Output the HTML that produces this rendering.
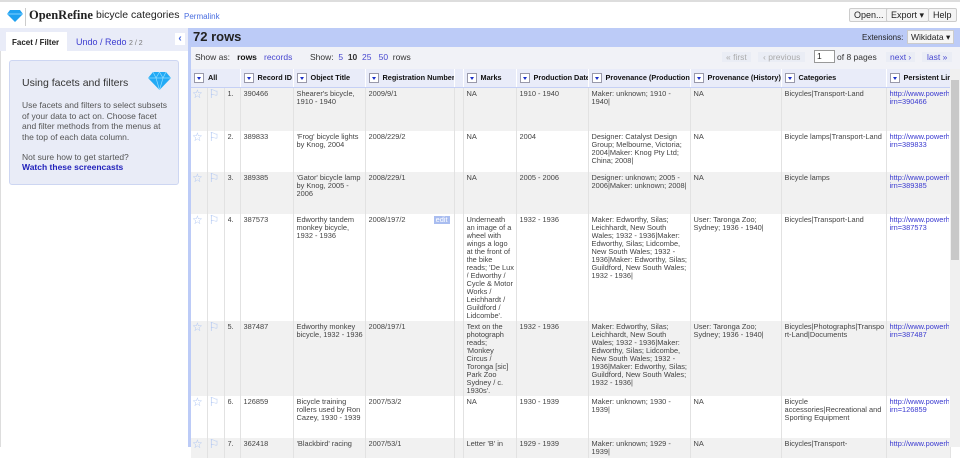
<!DOCTYPE html>
<html><head><meta charset="utf-8"><style>
*{box-sizing:border-box;margin:0;padding:0}
body{width:960px;height:447px;overflow:hidden;background:#fff;font-family:"Liberation Sans",Arial,sans-serif;position:relative;color:#222}
.abs{position:absolute}
.btn{position:absolute;top:8px;height:14px;border:1px solid #ccc;background:#f4f4f4;font-size:9px;line-height:12px;padding:0 4px;border-radius:2px;color:#222}
table{border-collapse:collapse;table-layout:fixed;width:759px;position:absolute;left:191px;top:69px;font-size:7.4px;line-height:8px}
td{vertical-align:top;padding:2px 1px 0 3px;border-right:1px solid #e2e2e2;word-wrap:break-word;color:#444}
td>div{overflow:hidden}
.h43 td>div{height:41px}.h41 td>div{height:39px}.h42 td>div{height:40px}.h107 td>div{height:105px}.h75 td>div{height:73px}.h20 td>div{height:18px}
tr.o td{background:#f1f1f1}
th{background:#e9ecf9;height:18px;border-right:1px solid #fff;border-bottom:1px solid #c5d0f5;font-size:7.3px;text-align:left;padding:0 3px;white-space:nowrap;overflow:hidden;color:#111}
.dd{display:inline-block;width:10px;height:10px;border:1px solid #99a;background:#fff;vertical-align:middle;margin-right:4px;position:relative}
.dd:after{content:"";position:absolute;left:2px;top:3px;border-left:2.5px solid transparent;border-right:2.5px solid transparent;border-top:3px solid #1a2fc8}
a{color:#3a3ad0;text-decoration:none;white-space:nowrap}
.st{color:#a9c2f2;font-size:12px;line-height:12px;padding:0 0 0 1px}
</style></head><body>
<div class="abs" style="left:0;top:0;width:960px;height:2px;background:#ddd"></div>
<svg class="abs" style="left:7px;top:10px" width="16" height="12" viewBox="0 0 16 12"><path d="M3 0h10l3 4-8 8-8-8z" fill="#1ea0f0"/><path d="M0 4h16" stroke="#7fd0ff" stroke-width="1"/></svg>
<div class="abs" style="left:25px;top:8px;width:1px;height:18px;background:#ccc"></div>
<div class="abs" style="left:29px;top:8px;font-family:'Liberation Serif',serif;font-weight:bold;font-size:12.5px">OpenRefine</div>
<div class="abs" style="left:96px;top:9px;font-size:10.5px;color:#222">bicycle categories</div>
<div class="abs" style="left:184px;top:12px;font-size:8px;color:#4a6ee0">Permalink</div>
<div class="btn" style="left:849px">Open...</div>
<div class="btn" style="left:886px">Export ▾</div>
<div class="btn" style="left:928px">Help</div>
<div class="abs" style="left:0;top:28px;width:188px;height:419px;background:#fff;border-left:1px solid #ddd"></div>
<div class="abs" style="left:0;top:28px;width:188px;height:23px;background:#e9ecf8"></div>
<div class="abs" style="left:6px;top:32px;width:61px;height:19px;background:#fff;font-size:8px;font-weight:bold;padding:6px 0 0 6px">Facet / Filter</div>
<div class="abs" style="left:76px;top:37px;font-size:9px;color:#3b3bd0">Undo / Redo <span style="color:#777;font-size:7px">2 / 2</span></div>
<div class="abs" style="left:175px;top:33px;width:10px;height:12px;background:#fff;color:#4466dd;font-size:10px;line-height:12px;text-align:center;font-weight:bold">‹</div>
<div class="abs" style="left:9px;top:60px;width:170px;height:125px;background:#e9ecf7;border:1px solid #cdd6f2;border-radius:3px"></div>
<svg class="abs" style="left:148px;top:72px" width="23" height="18" viewBox="0 0 23 18"><path d="M5 0h13l5 6-11.5 12L0 6z" fill="#22aaf5"/><path d="M0 6h23M5 0l3 6 3.5 12M18 0l-3 6-3.5 12M8 6l3.5-6 3.5 6" stroke="#8fdcff" stroke-width=".7" fill="none"/></svg>
<div class="abs" style="left:22px;top:77px;font-size:10.5px;color:#333">Using facets and filters</div>
<div class="abs" style="left:22px;top:100px;width:150px;font-size:8.5px;line-height:10.5px;color:#555">Use facets and filters to select subsets of your data to act on. Choose facet and filter methods from the menus at the top of each data column.</div>
<div class="abs" style="left:22px;top:152px;font-size:8.5px;color:#555">Not sure how to get started?</div>
<div class="abs" style="left:22px;top:162px;font-size:8.5px;font-weight:bold;color:#2222bb">Watch these screencasts</div>
<div class="abs" style="left:188px;top:28px;width:3px;height:419px;background:#bccbf7"></div>
<div class="abs" style="left:191px;top:28px;width:769px;height:19px;background:#bccbf7"></div>
<div class="abs" style="left:193px;top:29px;font-size:13px;font-weight:bold;color:#222">72 rows</div>
<div class="abs" style="left:862px;top:33px;font-size:8px;color:#222">Extensions:</div>
<div class="abs" style="left:907px;top:30px;width:47px;height:14px;background:#f5f5f5;border:1px solid #ccc;font-size:8.5px;line-height:12px;padding-left:3px">Wikidata ▾</div>
<div class="abs" style="left:191px;top:47px;width:769px;height:22px;background:#f1f2f7"></div>
<div class="abs" style="left:195px;top:52px;font-size:8.5px;color:#333">Show as: &nbsp; <b style="color:#111">rows</b> &nbsp; <span style="color:#4747d0">records</span></div>
<div class="abs" style="left:310px;top:52px;font-size:8.5px;color:#333">Show: &nbsp;<span style="color:#4747d0">5</span> &nbsp;<b>10</b> &nbsp;<span style="color:#4747d0">25</span> &nbsp; <span style="color:#4747d0">50</span> &nbsp;rows</div>
<div class="abs" style="left:722px;top:52px;font-size:8.5px;color:#aaa;background:#eaedf5;padding:0 4px">« first</div>
<div class="abs" style="left:758px;top:52px;font-size:8.5px;color:#aaa;background:#eaedf5;padding:0 5px">‹ previous</div>
<div class="abs" style="left:814px;top:50px;width:21px;height:13px;border:1px solid #999;background:#fff;font-size:8.5px;padding-left:2px">1</div>
<div class="abs" style="left:837px;top:52px;font-size:8.5px;color:#333">of 8 pages</div>
<div class="abs" style="left:886px;top:52px;font-size:8.5px;color:#4747d0;background:#eaedf5;padding:0 4px">next ›</div>
<div class="abs" style="left:922px;top:52px;font-size:8.5px;color:#4747d0;background:#eaedf5;padding:0 5px">last »</div>
<table>
<colgroup><col style="width:16px"><col style="width:17px"><col style="width:16px"><col style="width:53px"><col style="width:72px"><col style="width:89px"><col style="width:9px"><col style="width:53px"><col style="width:72px"><col style="width:102px"><col style="width:91px"><col style="width:105px"><col style="width:64px"></colgroup>
<tr><th colspan="3"><span class="dd"></span>All</th><th><span class="dd"></span>Record ID</th><th><span class="dd"></span>Object Title</th><th><span class="dd"></span>Registration Number</th><th></th><th><span class="dd"></span>Marks</th><th><span class="dd"></span>Production Date</th><th><span class="dd"></span>Provenance (Production)</th><th><span class="dd"></span>Provenance (History)</th><th><span class="dd"></span>Categories</th><th><span class="dd"></span>Persistent Link</th></tr>
<tr class="o h43"><td class="st"><div>☆</div></td><td class="st"><div>⚐</div></td><td><div>1.</div></td><td><div>390466</div></td><td><div>Shearer's bicycle, 1910 - 1940</div></td><td><div>2009/9/1</div></td><td><div></div></td><td><div>NA</div></td><td><div>1910 - 1940</div></td><td><div>Maker: unknown; 1910 - 1940|</div></td><td><div>NA</div></td><td><div>Bicycles|Transport-Land</div></td><td><div><a>http://www.powerho<br>irn=390466</a></div></td></tr>
<tr class="h41"><td class="st"><div>☆</div></td><td class="st"><div>⚐</div></td><td><div>2.</div></td><td><div>389833</div></td><td><div>'Frog' bicycle lights by Knog, 2004</div></td><td><div>2008/229/2</div></td><td><div></div></td><td><div>NA</div></td><td><div>2004</div></td><td><div>Designer: Catalyst Design Group; Melbourne, Victoria; 2004|Maker: Knog Pty Ltd; China; 2008|</div></td><td><div>NA</div></td><td><div>Bicycle lamps|Transport-Land</div></td><td><div><a>http://www.powerho<br>irn=389833</a></div></td></tr>
<tr class="o h42"><td class="st"><div>☆</div></td><td class="st"><div>⚐</div></td><td><div>3.</div></td><td><div>389385</div></td><td><div>'Gator' bicycle lamp by Knog, 2005 - 2006</div></td><td><div>2008/229/1</div></td><td><div></div></td><td><div>NA</div></td><td><div>2005 - 2006</div></td><td><div>Designer: unknown; 2005 - 2006|Maker: unknown; 2008|</div></td><td><div>NA</div></td><td><div>Bicycle lamps</div></td><td><div><a>http://www.powerho<br>irn=389385</a></div></td></tr>
<tr class="h107"><td class="st"><div>☆</div></td><td class="st"><div>⚐</div></td><td><div>4.</div></td><td><div>387573</div></td><td><div>Edworthy tandem monkey bicycle, 1932 - 1936</div></td><td><div>2008/197/2<span style="float:right;background:#a9bdf0;color:#fff;padding:0 2px;margin-right:3px">edit</span></div></td><td><div></div></td><td><div>Underneath an image of a wheel with wings a logo at the front of the bike reads; 'De Lux / Edworthy / Cycle &amp; Motor Works / Leichhardt / Guildford / Lidcombe'.</div></td><td><div>1932 - 1936</div></td><td><div>Maker: Edworthy, Silas; Leichhardt, New South Wales; 1932 - 1936|Maker: Edworthy, Silas; Lidcombe, New South Wales; 1932 - 1936|Maker: Edworthy, Silas; Guildford, New South Wales; 1932 - 1936|</div></td><td><div>User: Taronga Zoo; Sydney; 1936 - 1940|</div></td><td><div>Bicycles|Transport-Land</div></td><td><div><a>http://www.powerho<br>irn=387573</a></div></td></tr>
<tr class="o h75"><td class="st"><div>☆</div></td><td class="st"><div>⚐</div></td><td><div>5.</div></td><td><div>387487</div></td><td><div>Edworthy monkey bicycle, 1932 - 1936</div></td><td><div>2008/197/1</div></td><td><div></div></td><td><div>Text on the photograph reads; 'Monkey Circus / Toronga [sic] Park Zoo Sydney / c. 1930s'.</div></td><td><div>1932 - 1936</div></td><td><div>Maker: Edworthy, Silas; Leichhardt, New South Wales; 1932 - 1936|Maker: Edworthy, Silas; Lidcombe, New South Wales; 1932 - 1936|Maker: Edworthy, Silas; Guildford, New South Wales; 1932 - 1936|</div></td><td><div>User: Taronga Zoo; Sydney; 1936 - 1940|</div></td><td><div>Bicycles|Photographs|Transport-Land|Documents</div></td><td><div><a>http://www.powerho<br>irn=387487</a></div></td></tr>
<tr class="h42"><td class="st"><div>☆</div></td><td class="st"><div>⚐</div></td><td><div>6.</div></td><td><div>126859</div></td><td><div>Bicycle training rollers used by Ron Cazey, 1930 - 1939</div></td><td><div>2007/53/2</div></td><td><div></div></td><td><div>NA</div></td><td><div>1930 - 1939</div></td><td><div>Maker: unknown; 1930 - 1939|</div></td><td><div>NA</div></td><td><div>Bicycle accessories|Recreational and Sporting Equipment</div></td><td><div><a>http://www.powerho<br>irn=126859</a></div></td></tr>
<tr class="o h20"><td class="st"><div>☆</div></td><td class="st"><div>⚐</div></td><td><div>7.</div></td><td><div>362418</div></td><td><div>'Blackbird' racing</div></td><td><div>2007/53/1</div></td><td><div></div></td><td><div>Letter 'B' in</div></td><td><div>1929 - 1939</div></td><td><div>Maker: unknown; 1929 - 1939|</div></td><td><div>NA</div></td><td><div>Bicycles|Transport-</div></td><td><div><a>http://www.powerho</a></div></td></tr>
</table>
<div class="abs" style="left:950px;top:69px;width:10px;height:378px;background:#f0f0f0"></div>
<div class="abs" style="left:951px;top:80px;width:8px;height:180px;background:#c8c8c8"></div>
</body></html>
